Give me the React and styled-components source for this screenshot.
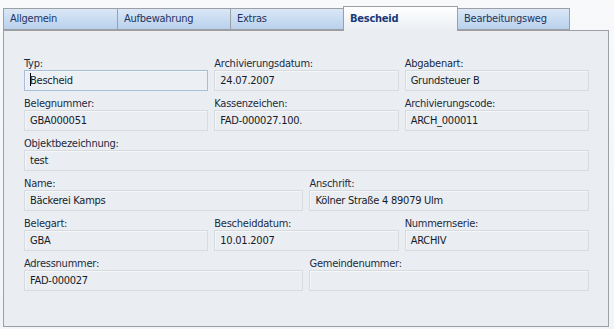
import React from 'react'
import styled, { createGlobalStyle } from 'styled-components'

const GlobalStyle = createGlobalStyle`
  html, body {
    margin: 0;
    padding: 0;
    background: #f3f6f9;
  }
  body {
    font-family: "DejaVu Sans Condensed", "Liberation Sans", sans-serif;
    font-size: 11px;
    letter-spacing: -0.25px;
  }
`

const Page = styled.div`
  width: 614px;
  height: 329px;
  box-sizing: border-box;
  padding: 6px 5px 2px 3px;
  display: flex;
  flex-direction: column;
  background: linear-gradient(#f7f9fb, #f1f4f8);
`

const TabStrip = styled.div`
  display: flex;
  align-items: flex-end;
  height: 24px;
  position: relative;
  z-index: 1;
`

const Tab = styled.div`
  width: ${(p) => p.w}px;
  height: ${(p) => (p.active ? '25px' : '22px')};
  box-sizing: border-box;
  margin-left: ${(p) => (p.first ? '0' : '-1px')};
  margin-bottom: ${(p) => (p.active ? '-1px' : '0')};
  border: 1px solid #9c9fa3;
  border-bottom: ${(p) => (p.active ? 'none' : '1px solid #9c9fa3')};
  background: ${(p) =>
    p.active
      ? 'linear-gradient(#ffffff, #f6f8fa 40%, #eaeef2)'
      : 'linear-gradient(#dae7f6, #c8dbf1 55%, #b9d1ed)'};
  color: ${(p) => (p.active ? '#173a7a' : '#1e3462')};
  font-weight: ${(p) => (p.active ? 'bold' : 'normal')};
  padding: ${(p) => (p.active ? '5px 0 0 6px' : '3px 0 0 6px')};
  white-space: nowrap;
`

const Panel = styled.div`
  flex: 1;
  border: 1px solid #9c9fa3;
  background: #eaeef2;
  padding: 26px 19px 0 20px;
`

const Grid = styled.div`
  display: grid;
  grid-template-columns: repeat(6, 1fr);
  column-gap: 6px;
  row-gap: 6px;
`

const Field = styled.div`
  grid-column: span ${(p) => p.span || 2};
  display: flex;
  flex-direction: column;
`

const Label = styled.div`
  height: 13px;
  line-height: 13px;
  color: #1c2a40;
  white-space: nowrap;
`

const Input = styled.div`
  height: 21px;
  box-sizing: border-box;
  border: 1px solid ${(p) => (p.focused ? '#a8bed8' : '#d6dbe0')};
  box-shadow: inset 1px 1px 0 ${(p) => (p.focused ? '#f3f6fa' : '#f4f6f8')};
  background: ${(p) => (p.focused ? '#ecf0f5' : '#eaeef2')};
  padding: 0 5px;
  line-height: 19px;
  color: #141c28;
  white-space: nowrap;
  overflow: hidden;
`

const Caret = styled.span`
  display: inline-block;
  width: 1px;
  height: 13px;
  background: #000;
  vertical-align: -2px;
  margin-right: -1px;
`

const tabs = [
  { name: 'Allgemein', w: 115 },
  { name: 'Aufbewahrung', w: 114 },
  { name: 'Extras', w: 114 },
  { name: 'Bescheid', w: 115 },
  { name: 'Bearbeitungsweg', w: 113 },
]

const fields = [
  { label: 'Typ:', value: 'Bescheid', focused: true },
  { label: 'Archivierungsdatum:', value: '24.07.2007' },
  { label: 'Abgabenart:', value: 'Grundsteuer B' },
  { label: 'Belegnummer:', value: 'GBA000051' },
  { label: 'Kassenzeichen:', value: 'FAD-000027.100.' },
  { label: 'Archivierungscode:', value: 'ARCH_000011' },
  { label: 'Objektbezeichnung:', value: 'test', span: 6 },
  { label: 'Name:', value: 'Bäckerei Kamps', span: 3 },
  { label: 'Anschrift:', value: 'Kölner Straße 4 89079 Ulm', span: 3 },
  { label: 'Belegart:', value: 'GBA' },
  { label: 'Bescheiddatum:', value: '10.01.2007' },
  { label: 'Nummernserie:', value: 'ARCHIV' },
  { label: 'Adressnummer:', value: 'FAD-000027', span: 3 },
  { label: 'Gemeindenummer:', value: '', span: 3 },
]

export default function App() {
  return (
    <Page>
      <GlobalStyle />
      <TabStrip>
        {tabs.map((t, i) => (
          <Tab key={t.name} w={t.w} first={i === 0} active={t.name === 'Bescheid'}>
            {t.name}
          </Tab>
        ))}
      </TabStrip>
      <Panel>
        <Grid>
          {fields.map((f) => (
            <Field key={f.label} span={f.span}>
              <Label>{f.label}</Label>
              <Input focused={f.focused}>
                {f.focused && <Caret />}
                {f.value}
              </Input>
            </Field>
          ))}
        </Grid>
      </Panel>
    </Page>
  )
}
